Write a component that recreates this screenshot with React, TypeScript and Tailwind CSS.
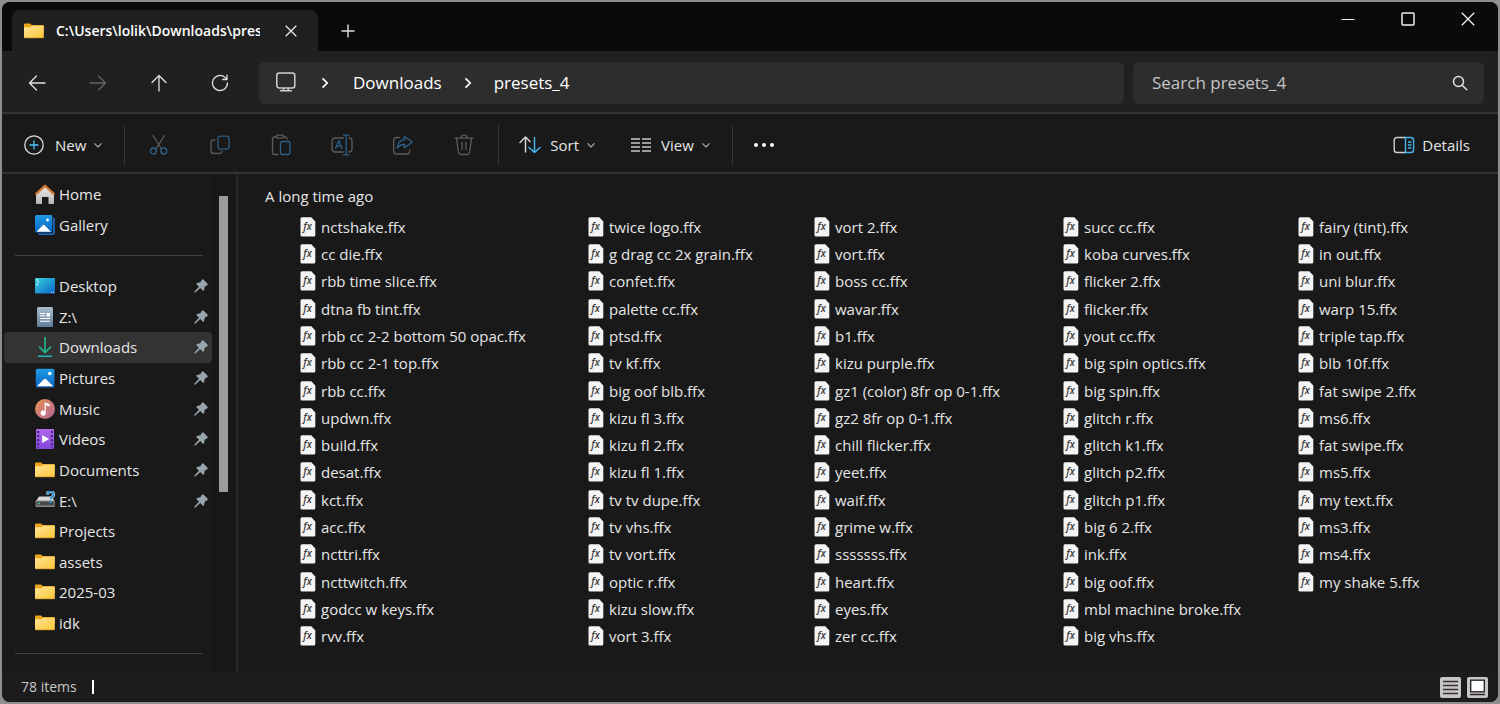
import type { ReactNode } from "react";

const columns = [
  [
    "nctshake", "cc die", "rbb time slice", "dtna fb tint", "rbb cc 2-2 bottom 50 opac", "rbb cc 2-1 top", "rbb cc", "updwn",
    "build", "desat", "kct", "acc", "ncttri", "ncttwitch", "godcc w keys", "rvv",
  ],
  [
    "twice logo", "g drag cc 2x grain", "confet", "palette cc", "ptsd", "tv kf", "big oof blb", "kizu fl 3",
    "kizu fl 2", "kizu fl 1", "tv tv dupe", "tv vhs", "tv vort", "optic r", "kizu slow", "vort 3",
  ],
  [
    "vort 2", "vort", "boss cc", "wavar", "b1", "kizu purple", "gz1 (color) 8fr op 0-1", "gz2 8fr op 0-1",
    "chill flicker", "yeet", "waif", "grime w", "sssssss", "heart", "eyes", "zer cc",
  ],
  [
    "succ cc", "koba curves", "flicker 2", "flicker", "yout cc", "big spin optics", "big spin", "glitch r",
    "glitch k1", "glitch p2", "glitch p1", "big 6 2", "ink", "big oof", "mbl machine broke", "big vhs",
  ],
  [
    "fairy (tint)", "in out", "uni blur", "warp 15", "triple tap", "blb 10f", "fat swipe 2", "ms6",
    "fat swipe", "ms5", "my text", "ms3", "ms4", "my shake 5",
  ],
];

function FolderIcon() {
  return (
    <svg width="20" height="20" viewBox="0 0 20 20">
      <defs>
        <linearGradient id="folder" x1="0" y1="0" x2="1" y2="1">
          <stop offset="0" stopColor="#ffe59a" />
          <stop offset="1" stopColor="#fcc534" />
        </linearGradient>
      </defs>
      <path d="M0 3.5q0-1 1-1h5l1.7 1.6H19q.8 0 .8.9v6H0z" fill="#eda51c" />
      <path d="M0 6.2h6.6l1.6-1.4H19q.8 0 .8.8v10.6q0 .8-.8.8H1q-1 0-1-.8z" fill="url(#folder)" />
      <path d="M.4 16.8h19" stroke="#d99a25" strokeWidth=".7" />
    </svg>
  );
}

function HomeIcon() {
  return (
    <svg width="20" height="20" viewBox="0 0 20 20">
      <defs>
        <linearGradient id="house" x1="0" y1="0" x2="0" y2="1">
          <stop offset="0" stopColor="#eeeeee" />
          <stop offset="1" stopColor="#b5b5b5" />
        </linearGradient>
      </defs>
      <path d="M1 9.5 10 2l9 7.5V19q0 1-1 1h-4.5v-7H7v7H1.8Q1 20 1 19z" fill="url(#house)" />
      <path d="M1.2 9.8 10 1.8l8.8 8" fill="none" stroke="#d27a35" strokeWidth="2.3" strokeLinecap="round" strokeLinejoin="round" />
    </svg>
  );
}

function PictureIcon({ stacked = false }: { stacked?: boolean }) {
  return (
    <svg width="20" height="20" viewBox="0 0 20 20">
      <defs>
        <linearGradient id="sky" x1="0" y1="0" x2="0" y2="1">
          <stop offset="0" stopColor="#1f9be4" />
          <stop offset="1" stopColor="#0964c4" />
        </linearGradient>
      </defs>
      {stacked ? (
        <>
          <path d="M19 3v14.5q0 1.7-1.7 1.7H3.5" fill="none" stroke="#1a73c7" strokeWidth="1.6" />
          <rect width="17.3" height="17.5" rx="1.5" fill="url(#sky)" />
          <path d="m1.5 16.8 6-6.4q1.2-1.2 2.4 0l6 6.4z" fill="#fff" />
          <circle cx="12.5" cy="5" r="1.4" fill="#fff" />
        </>
      ) : (
        <>
          <rect x=".8" y=".8" width="18.6" height="18.6" rx="1.5" fill="url(#sky)" />
          <path d="m2 18.3 6.6-6.8q1.4-1.3 2.8 0l6.8 6.8z" fill="#fff" />
          <circle cx="14.8" cy="5.5" r="1.8" fill="#fff" />
        </>
      )}
    </svg>
  );
}

function DesktopIcon() {
  return (
    <svg width="20" height="20" viewBox="0 0 20 20">
      <defs>
        <linearGradient id="desk" x1="0" y1="0" x2="1" y2="1">
          <stop offset="0" stopColor="#35d0dc" />
          <stop offset="1" stopColor="#0a66c9" />
        </linearGradient>
      </defs>
      <rect y="2" width="20" height="15.5" rx="1" fill="url(#desk)" />
      <path d="M1.5 3.8H3M2.5 6.2H4M1.5 8.6H3" stroke="#fff" strokeWidth="1.3" />
      <path d="M16 16.3h1M18 16.3h1" stroke="#d5ecff" />
    </svg>
  );
}

function DocumentDriveIcon() {
  return (
    <svg width="20" height="20" viewBox="0 0 20 20">
      <defs>
        <linearGradient id="doc" x1="0" y1="0" x2="0" y2="1">
          <stop offset="0" stopColor="#a9bccd" />
          <stop offset="1" stopColor="#627e9b" />
        </linearGradient>
      </defs>
      <rect x="2" width="16" height="20" rx="1.5" fill="url(#doc)" />
      <path d="M5 6.5h5M5 8.8h5M5 11.5h10M5 14.2h10" stroke="#fff" strokeWidth="1.1" />
      <rect x="11.5" y="6" width="3.5" height="3.5" fill="#fff" />
    </svg>
  );
}

function DownloadIcon() {
  return (
    <svg width="20" height="20" viewBox="0 0 20 20" fill="none" strokeLinecap="round" strokeLinejoin="round">
      <path d="M10 .8V15M4.5 10.2l5.5 5.5 5.5-5.5" stroke="#23b18c" strokeWidth="1.7" />
      <path d="M3.5 19.2h13" stroke="#25b9b9" strokeWidth="1.5" />
    </svg>
  );
}

function MusicIcon() {
  return (
    <svg width="20" height="20" viewBox="0 0 20 20">
      <defs>
        <linearGradient id="music" x1="0" y1="0" x2="1" y2="1">
          <stop offset="0" stopColor="#e79550" />
          <stop offset="1" stopColor="#b2629d" />
        </linearGradient>
      </defs>
      <circle cx="10" cy="10" r="10" fill="url(#music)" />
      <path d="M9.6 4q0-.6.6-.4l4 1.5q.4.2.4.6v1.8l-3.8-1.2V14a2.6 2.6 0 1 1-1.2-2.1z" fill="#fff" />
    </svg>
  );
}

function VideoIcon() {
  return (
    <svg width="20" height="20" viewBox="0 0 20 20">
      <defs>
        <linearGradient id="video" x1="0" y1="0" x2="0" y2="1">
          <stop offset="0" stopColor="#b068ea" />
          <stop offset="1" stopColor="#8147dc" />
        </linearGradient>
      </defs>
      <rect x="1" width="18" height="20" rx="1.2" fill="url(#video)" />
      <path d="M3.2 2v17M16.8 2v17" stroke="#3c2275" strokeWidth="2" strokeDasharray="2 2.1" />
      <path d="M7.2 6v8l7-4z" fill="#fff" />
    </svg>
  );
}

function DriveIcon() {
  return (
    <svg width="20" height="20" viewBox="0 0 20 20">
      <path d="M4 5.5h12.500l3.300 5H.8z" fill="#d9d9d9" />
      <rect x=".6" y="9.5" width="19.2" height="6.5" rx="1" fill="#8a8a8a" />
      <rect x="1.6" y="10.5" width="17.2" height="4" rx=".5" fill="#484848" />
      <circle cx="4" cy="12.5" r="1" fill="#36d399" />
      <path d="M12.5 3.5a3 3 0 1 1 4.7 2.4q-1.6 1-1.6 2.3" fill="none" stroke="#dceefa" strokeWidth="3" />
      <path d="M12.5 3.5a3 3 0 1 1 4.7 2.4q-1.6 1-1.6 2.3" fill="none" stroke="#2589cb" strokeWidth="1.9" />
      <circle cx="15.6" cy="11" r="1.3" fill="#2589cb" />
    </svg>
  );
}

function PinIcon() {
  return (
    <svg width="14" height="14" viewBox="0 0 14 14" className="ml-auto">
      <path
        d="M7.7.9q.9-1 1.900-.1l3.800 3.700q.8 1-.2 1.700L10.700 7.700l-.6 3.300q-.5 1.200-1.400.4L6.300 9 1.400 13.500l-1.100.2.200-1.100L5 7.700 2.700 5.400q-.8-.9.400-1.400l3.200-.7z"
        fill="#98a5ac"
      />
    </svg>
  );
}

function ChevronDown() {
  return (
    <svg width="8" height="8" viewBox="0 0 8 8" fill="none" stroke="#b0b0b0" strokeWidth="1.2">
      <path d="M.5 2.3 4 5.8l3.500-3.500" />
    </svg>
  );
}

function ChevronRight() {
  return (
    <svg width="8" height="12" viewBox="0 0 8 12" fill="none" stroke="#fff" strokeWidth="1.7">
      <path d="M1.5 1.3 6.2 6l-4.700 4.700" />
    </svg>
  );
}

function FileIcon() {
  return (
    <svg width="16" height="20" viewBox="0 0 16 20" className="shrink-0">
      <path d="M2 .3h9.3l4 4.2V18q0 1.500-1.500 1.500H2Q.5 19.500.5 18V1.800Q.5.3 2 .3z" fill="#f4f4f4" />
      <text x="7.600" y="13" textAnchor="middle" fontSize="10" fontStyle="italic" fontWeight="600" fill="#3d3d3d">
        fx
      </text>
    </svg>
  );
}

function NavButton({ label, dim = false, children }: { label: string; dim?: boolean; children: ReactNode }) {
  return (
    <button aria-label={label} className="flex h-10 w-[61px] items-center justify-center">
      <svg width="18" height="18" viewBox="0 0 18 18" fill="none" stroke={dim ? "#646464" : "#e0e0e0"} strokeWidth="1.3" strokeLinecap="round" strokeLinejoin="round">
        {children}
      </svg>
    </button>
  );
}

function ToolButton({ label, children }: { label: string; children: ReactNode }) {
  return (
    <button aria-label={label} className="flex h-10 w-[61px] items-center justify-center">
      <svg width="22" height="22" viewBox="0 0 22 22" fill="none" stroke="#5c5c5c" strokeWidth="1.3" strokeLinecap="round" strokeLinejoin="round">
        {children}
      </svg>
    </button>
  );
}

function WindowButton({ label, children }: { label: string; children: ReactNode }) {
  return (
    <button aria-label={label} className="flex h-[34px] w-[60px] items-center justify-center">
      <svg width="14" height="14" viewBox="0 0 14 14" fill="none" stroke="#f0f0f0" strokeWidth="1.3">
        {children}
      </svg>
    </button>
  );
}

function SideItem({ icon, label, pinned = false, active = false }: { icon: ReactNode; label: string; pinned?: boolean; active?: boolean }) {
  return (
    <a href="#" className={`flex items-center gap-1 rounded-sm pr-1 pl-[31px] ${active ? "bg-[#333333]" : ""}`}>
      {icon}
      <span>{label}</span>
      {pinned && <PinIcon />}
    </a>
  );
}

function SideDivider() {
  return (
    <div className="flex items-center pr-[9px] pl-[11px]">
      <hr className="w-full border-[#424242]" />
    </div>
  );
}

export default function App() {
  return (
    <div className="flex min-h-screen flex-col bg-[#8f8f8f] p-0.5 font-['Open_Sans',sans-serif] text-[15px] leading-5 text-[#e6e6e6]">
      <div className="flex flex-1 flex-col overflow-hidden rounded-lg bg-[#191919]">
        {/* Title bar */}
        <header className="flex h-[49px] bg-[#0a0a0a] pl-2.5">
          <div className="mt-2 flex w-[306px] items-center rounded-t-lg bg-[#202020] pl-3 text-white">
            <FolderIcon />
            <span className="ml-3 w-[204px] overflow-hidden text-sm font-semibold whitespace-nowrap">C:\Users\lolik\Downloads\presets_4</span>
            <button aria-label="Close tab" className="ml-[15px] flex h-8 w-8 items-center justify-center">
              <svg width="12" height="12" viewBox="0 0 12 12" stroke="#e8e8e8" strokeWidth="1.3">
                <path d="m.7.7 10.600 10.600M11.300.7.7 11.300" />
              </svg>
            </button>
          </div>
          <button aria-label="New tab" className="mt-2 ml-3 flex w-9 items-center justify-center">
            <svg width="14" height="14" viewBox="0 0 14 14" stroke="#e0e0e0" strokeWidth="1.4">
              <path d="M7 .5v13M.5 7h13" />
            </svg>
          </button>
          <div className="ml-auto flex">
            <WindowButton label="Minimize">
              <path d="M.5 7.500h13" strokeWidth="1" />
            </WindowButton>
            <WindowButton label="Maximize">
              <rect x="1" y="1" width="12" height="12" rx="1" strokeWidth="1.5" />
            </WindowButton>
            <WindowButton label="Close">
              <path d="m.8.800 12.400 12.400M13.200.800.8 13.200" />
            </WindowButton>
          </div>
        </header>

        {/* Navigation */}
        <nav className="flex items-center border-b-2 border-[#333333] bg-[#202020] pt-[11px] pr-3.5 pb-2 pl-1">
          <NavButton label="Back">
            <path d="M17 9H1.500M8.500 2 1.500 9l7 7" />
          </NavButton>
          <NavButton label="Forward" dim>
            <path d="M1 9h15.500M9.500 2l7 7-7 7" />
          </NavButton>
          <NavButton label="Up">
            <path d="M9 17V1.500M2 8.500l7-7 7 7" />
          </NavButton>
          <NavButton label="Refresh">
            <path d="M16.500 9A7.500 7.500 0 1 1 14 3.400l1.800 1.800M16 1.200v4.300h-4.300" />
          </NavButton>
          <div className="ml-[9px] flex h-[42px] flex-1 items-center rounded-md bg-[#2d2d2d] pl-4 text-[17px] text-white">
            <svg width="22" height="22" viewBox="0 0 22 22" fill="none" stroke="#cfcfcf" strokeWidth="1.5">
              <rect x="1.8" y="1" width="18" height="15" rx="2.5" />
              <path d="M5 18.700h11.800M8.500 16v2.700M13.200 16v2.700" />
            </svg>
            <span className="mx-6">
              <ChevronRight />
            </span>
            <a href="#">Downloads</a>
            <span className="mx-[22px]">
              <ChevronRight />
            </span>
            <a href="#">presets_4</a>
          </div>
          <label className="ml-[9px] flex h-[42px] w-[351px] items-center rounded-md bg-[#2d2d2d] pr-4 pl-[19px]">
            <input aria-label="Search presets_4" placeholder="Search presets_4" className="min-w-0 flex-1 bg-transparent text-[17px] outline-none placeholder:text-[#c4c4c4]" />
            <svg width="16" height="16" viewBox="0 0 16 16" fill="none" stroke="#e0e0e0" strokeWidth="1.5" strokeLinecap="round">
              <circle cx="6.5" cy="6.5" r="5" />
              <path d="m10.200 10.200 4.600 4.600" />
            </svg>
          </label>
        </nav>

        {/* Command bar */}
        <div className="flex h-[60px] items-center border-b-2 border-[#333333] pt-[3px] pr-7 pl-[22px]">
          <button className="flex items-center">
            <svg width="20" height="20" viewBox="0 0 20 20" fill="none">
              <circle cx="10" cy="10" r="9.2" stroke="#dedede" strokeWidth="1.3" />
              <path d="M10 5.500v9M5.500 10h9" stroke="#4cc2ff" strokeWidth="1.3" />
            </svg>
            <span className="mr-2 ml-[11px]">New</span>
            <ChevronDown />
          </button>
          <span className="ml-[22px] h-10 w-px bg-[#383838]" />
          <div className="mr-1 ml-[3px] flex">
            <ToolButton label="Cut">
              <path d="M5 1.500 13.500 15M16.500 1.500 8 15" />
              <g stroke="#2f5f87">
                <circle cx="5.500" cy="17" r="3" />
                <circle cx="15.800" cy="17" r="3" />
              </g>
            </ToolButton>
            <ToolButton label="Copy">
              <path d="M6 6H4.500Q2 6 2 8.500v8Q2 19.500 5 19.500h5q2.500 0 3-2" />
              <rect x="9" y="2.200" width="11" height="13" rx="2.5" stroke="#2f5f87" />
            </ToolButton>
            <ToolButton label="Paste">
              <path d="M6.500 3H4.500Q2.500 3 2.500 5v13.500q0 2 2 2H8M13.500 3h1.500q2 0 2 2" />
              <rect x="6.500" y="1.200" width="7" height="3" rx="1.5" />
              <rect x="10.500" y="7.500" width="9.5" height="13" rx="1.8" stroke="#2f5f87" />
            </ToolButton>
            <ToolButton label="Rename">
              <path d="M12.500 4H4.200Q1 4 1 7v8q0 3 3.200 3h8.300M18 4q3 0 3 3v8q0 3-3 3" />
              <g stroke="#2f5f87">
                <path d="m4.500 14.500 3.300-8 3.300 8M5.700 12h4.200" />
                <path d="M15.200 1.200v19.600M12.500 1.200H18M12.500 20.800H18" />
              </g>
            </ToolButton>
            <ToolButton label="Share">
              <path d="M7.500 3.500H4.500q-2.800 0-2.800 2.800v10.900Q1.700 20 4.500 20h10.300q2.800 0 2.800-2.800v-1" />
              <path d="M12.500 2.500 20.300 8l-7.800 5.700v-3.200q-4.700-.2-7.200 3.700.6-7.800 7.200-8.500z" stroke="#2f5f87" />
            </ToolButton>
            <ToolButton label="Delete">
              <path d="M2 4.200h18M3.500 4.200 5.300 18q.3 2.500 2.500 2.500h6.400q2.200 0 2.500-2.500l1.800-13.800M8 4.200q0-3 3-3t3 3M9 8.500v7M13 8.500v7" />
            </ToolButton>
          </div>
          <span className="h-10 w-px bg-[#383838]" />
          <button className="ml-5 flex items-center">
            <svg width="22" height="20" viewBox="0 0 22 20" fill="none" strokeWidth="1.5" strokeLinecap="round" strokeLinejoin="round">
              <path d="M6.500 17V2M1 7.500 6.500 2 11 6.500" stroke="#d6d6d6" />
              <path d="M15.500 2.500V17.500M10 12.500l5.500 5 5.500-5" stroke="#45b6f0" />
            </svg>
            <span className="mr-2 ml-[9px]">Sort</span>
            <ChevronDown />
          </button>
          <button className="ml-[35px] flex items-center">
            <svg width="22" height="16" viewBox="0 0 22 16" stroke="#c8c8c8" strokeWidth="1.4">
              <path d="M1 2h9M12 2h9M1 6h9M12 6h9M1 10h9M12 10h9M1 14h9M12 14h9" />
            </svg>
            <span className="mr-2 ml-[9px]">View</span>
            <ChevronDown />
          </button>
          <span className="ml-[22px] h-10 w-px bg-[#383838]" />
          <button aria-label="See more" className="ml-[7px] flex h-10 w-12 items-center justify-center">
            <svg width="22" height="6" viewBox="0 0 22 6" fill="#fff">
              <circle cx="3" cy="3" r="2" />
              <circle cx="11" cy="3" r="2" />
              <circle cx="19" cy="3" r="2" />
            </svg>
          </button>
          <button className="ml-auto flex items-center gap-[7px]">
            <svg width="22" height="18" viewBox="0 0 22 18" fill="none" strokeWidth="1.4">
              <path d="M12.500 1.500H4q-2.800 0-2.800 2.800v9.400q0 2.800 2.800 2.800h8.500" stroke="#cfcfcf" />
              <path d="M12.500 1.500h5.300q2.800 0 2.800 2.800v9.400q0 2.800-2.800 2.800h-5.300zM15 6h3.500M15 9h3.500M15 12h3.500" stroke="#45b6f0" />
            </svg>
            <span>Details</span>
          </button>
        </div>

        <div className="flex flex-1">
          {/* Sidebar */}
          <aside className="flex w-[236px] border-r-2 border-[#272727] pl-0.5">
            <div className="grid w-[208px] grid-rows-[repeat(16,1fr)] pt-[5px] pb-[3px]">
              <SideItem icon={<HomeIcon />} label="Home" />
              <SideItem icon={<PictureIcon stacked />} label="Gallery" />
              <SideDivider />
              <SideItem icon={<DesktopIcon />} label="Desktop" pinned />
              <SideItem icon={<DocumentDriveIcon />} label="Z:\" pinned />
              <SideItem icon={<DownloadIcon />} label="Downloads" pinned active />
              <SideItem icon={<PictureIcon />} label="Pictures" pinned />
              <SideItem icon={<MusicIcon />} label="Music" pinned />
              <SideItem icon={<VideoIcon />} label="Videos" pinned />
              <SideItem icon={<FolderIcon />} label="Documents" pinned />
              <SideItem icon={<DriveIcon />} label="E:\" pinned />
              <SideItem icon={<FolderIcon />} label="Projects" />
              <SideItem icon={<FolderIcon />} label="assets" />
              <SideItem icon={<FolderIcon />} label="2025-03" />
              <SideItem icon={<FolderIcon />} label="idk" />
              <SideDivider />
            </div>
            <div className="flex flex-1 flex-col bg-[#171717] pt-[22px] pb-[180px] pl-[7px]">
              <div className="w-[9px] flex-1 bg-[#9b9b9b]" />
            </div>
          </aside>

          {/* File list */}
          <main className="flex flex-1 flex-col pt-3 pb-[22px] pl-[27px]">
            <h2>A long time ago</h2>
            <div className="mt-[7px] ml-[35px] grid flex-1 grid-cols-[288px_226px_249px_235px_1fr]">
              {columns.map((files) => (
                <ul key={files[0]} className="grid grid-rows-[repeat(16,1fr)]">
                  {files.map((name) => (
                    <li key={name} className="flex items-center gap-[5px] whitespace-nowrap">
                      <FileIcon />
                      {name}.ffx
                    </li>
                  ))}
                </ul>
              ))}
            </div>
          </main>
        </div>

        {/* Status bar */}
        <footer className="flex h-[30px] items-center bg-[#1c1c1c] pr-2.5 pl-[19px]">
          <span className="text-sm text-[#c8c8c8]">78 items</span>
          <span className="ml-[15px] h-3.5 w-0.5 bg-white" />
          <div className="ml-auto flex gap-1.5">
            <button aria-label="Details view">
              <svg width="21" height="21" viewBox="0 0 21 21">
                <rect width="21" height="21" rx="2" fill="#c6c6c6" />
                <path d="M3 4.500h15M3 8.500h15M3 12.500h15M3 16.500h15" stroke="#3a3030" strokeWidth="1.4" />
              </svg>
            </button>
            <button aria-label="Large icons view">
              <svg width="21" height="21" viewBox="0 0 21 21">
                <rect width="21" height="21" rx="2" fill="#c6c6c6" />
                <rect x="3.700" y="3.200" width="13.6" height="11.6" fill="#fff" stroke="#302828" strokeWidth="1.4" />
                <path d="M3 17.500h15" stroke="#302828" strokeWidth="1.3" />
              </svg>
            </button>
          </div>
        </footer>
      </div>
    </div>
  );
}
